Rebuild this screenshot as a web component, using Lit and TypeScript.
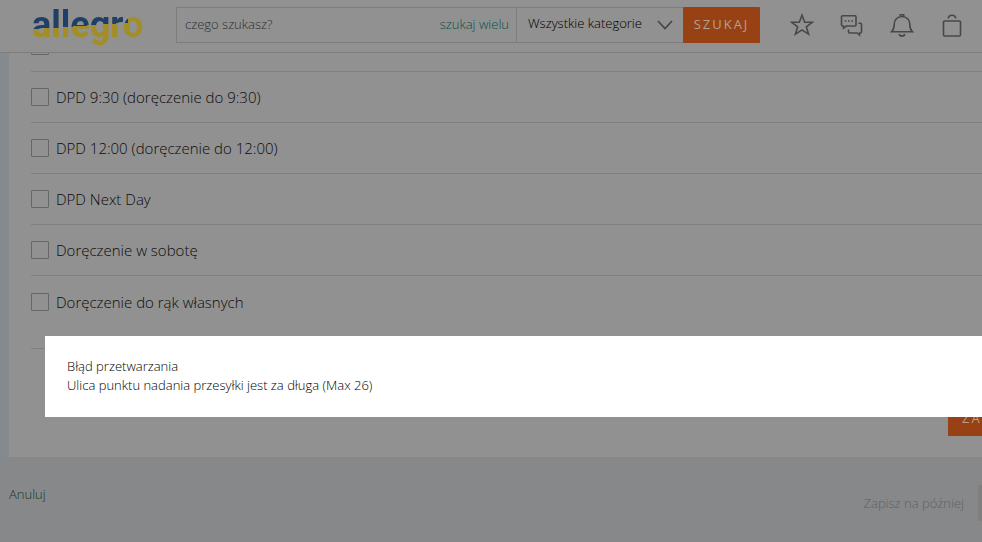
import { LitElement, html, css, svg } from "lit";
import { customElement } from "lit/decorators.js";

const OPTIONS = [
  "DPD 9:30 (doręczenie do 9:30)",
  "DPD 12:00 (doręczenie do 12:00)",
  "DPD Next Day",
  "Doręczenie w sobotę",
  "Doręczenie do rąk własnych",
];

const ICONS = [
  {
    label: "Obserwowane",
    art: svg`<path d="M12 2.2 14.7 9.3H22.3L16.3 13.8 18.6 21.2 12 16.9 5.4 21.2 7.7 13.8 1.7 9.3H9.3Z" stroke-linejoin="miter"/>`,
  },
  {
    label: "Wiadomości",
    art: svg`<path d="M2.5 2.7H15Q16 2.7 16 3.7V12Q16 13 15 13H6.5L3.5 15.2V13H2.5Q1.5 13 1.5 12V3.7Q1.5 2.7 2.5 2.7Z"/><path d="M18.5 10.2H20.5Q21.5 10.2 21.5 11.2V19Q21.5 20 20.5 20H19.5V22L17 20H9.5Q8.5 20 8.5 19V16.5"/><path d="M4.7 8H6.3M8 8H9.6M11.3 8H12.9"/>`,
  },
  {
    label: "Powiadomienia",
    art: svg`<path d="M1.5 18.8H22.5C20.5 17 19.8 15.5 19.8 11.5C19.8 7 16.6 3.5 12 3.5S4.2 7 4.2 11.5C4.2 15.5 3.5 17 1.5 18.8Z"/><path d="M10.3 3.3V1.7H13.7V3.3M9.2 21C9.8 23.8 14.2 23.8 14.8 21"/>`,
  },
  {
    label: "Koszyk",
    art: svg`<rect x="3.5" y="8" width="17" height="15" rx="1"/><path d="M8.2 5.3C8.6 1.2 15.4 1.2 15.8 5.3"/>`,
  },
];

@customElement("app-root")
export class AppRoot extends LitElement {
  static styles = css`
    :host {
      display: block;
      position: relative;
      min-height: 100vh;
      overflow: hidden;
      background: #87888a;
      color: #1c1c1c;
      font: 300 13px/20px "Open Sans", "Noto Sans", sans-serif;
    }
    * {
      box-sizing: border-box;
    }
    button,
    input,
    select {
      margin: 0;
      font: inherit;
      color: inherit;
    }
    .header {
      position: relative;
      z-index: 1;
      display: flex;
      align-items: center;
      height: 53px;
      padding: 0 18px 3px 32px;
      background: #919191;
      border-bottom: 1px solid #7d7d7d;
    }
    .logo {
      flex: none;
      width: 144px;
      text-decoration: none;
    }
    .logo-text {
      display: block;
      width: max-content;
      font: 700 36px/44px Roboto, "Open Sans", sans-serif;
      color: transparent;
      background: linear-gradient(176deg, #1e3f6c 52%, #a28e24 52%) 0 0 / 96px 44px no-repeat,
        #a28e24;
      -webkit-background-clip: text;
      background-clip: text;
    }
    .search {
      flex: 1;
      display: flex;
      height: 36px;
    }
    .query {
      flex: 1;
      min-width: 0;
      display: flex;
      align-items: center;
      border: 1px solid #7d7d7d;
      padding: 0 7px 2px 8px;
    }
    .query-input {
      flex: 1;
      min-width: 0;
      padding: 0;
      border: 0;
      outline: 0;
      background: none;
    }
    .query-input::placeholder {
      color: #303030;
      opacity: 1;
    }
    .multi {
      color: #0a4f48;
      text-decoration: none;
    }
    .category {
      position: relative;
      width: 166px;
    }
    .category-select {
      width: 100%;
      height: 100%;
      padding: 0 32px 3px 11px;
      appearance: none;
      border: solid #7d7d7d;
      border-width: 1px 0;
      border-radius: 0;
      background: none;
      color: #000;
    }
    .chevron {
      position: absolute;
      right: 10px;
      top: 12px;
      fill: none;
      stroke: #454545;
      stroke-width: 1.6;
      pointer-events: none;
    }
    .primary {
      height: 36px;
      border: 0;
      border-radius: 1px;
      background: #974114;
      color: #b5a08f;
      font-weight: 400;
      letter-spacing: 2px;
    }
    .find {
      width: 77px;
      padding: 0 0 2px;
    }
    .icons {
      display: flex;
      gap: 26px;
      margin-left: 30px;
    }
    .icon {
      display: block;
      width: 24px;
      height: 24px;
      padding: 0;
      border: 0;
      background: none;
    }
    .icon svg {
      display: block;
      fill: none;
      stroke: #484848;
      stroke-width: 1.6;
    }
    .content {
      padding-left: 9px;
      background: #858a8e;
    }
    .card {
      overflow: hidden;
      padding-left: 22px;
      padding-bottom: 21px;
      background: #919191;
    }
    .options {
      margin: -32px 0 0;
      padding: 0 0 21px;
      list-style: none;
      border-bottom: 1px solid #7f7f7f;
    }
    .option {
      display: flex;
      align-items: center;
      height: 51px;
      font-size: 15px;
      color: #0c0c0c;
      border-bottom: 1px solid #7f7f7f;
    }
    .option:last-child {
      border-bottom: 0;
    }
    .option-label {
      display: flex;
      align-items: center;
      gap: 7px;
    }
    .box {
      width: 18px;
      height: 18px;
      appearance: none;
      border: 1px solid #666;
      border-radius: 1px;
    }
    .card-actions {
      display: flex;
      justify-content: flex-end;
      margin-top: 51px;
    }
    .submit {
      width: 34px;
      padding: 0 0 0 14px;
      border-radius: 0;
      text-align: left;
      white-space: nowrap;
      overflow: hidden;
    }
    .footer {
      display: flex;
      justify-content: space-between;
      align-items: flex-start;
      padding: 27px 0 20px 9px;
    }
    .cancel {
      color: #123a30;
      text-decoration: none;
    }
    .later-group {
      display: flex;
      align-items: center;
      gap: 14px;
      margin-top: 1px;
    }
    .later {
      padding: 0;
      border: 0;
      background: none;
      color: #606163;
    }
    .next {
      width: 4px;
      height: 36px;
      padding: 0;
      border: 0;
      background: #7f7f7f;
    }
    .dialog {
      position: absolute;
      z-index: 2;
      top: 336px;
      left: 45px;
      right: 0;
      padding: 21px 22px 22px;
      background: #fff;
      color: #000;
      line-height: 19px;
    }
    .dialog-line {
      margin: 0;
    }
  `;

  render() {
    return html`
      <header class="header">
        <a class="logo" href="#"><span class="logo-text">allegro</span></a>
        <form class="search">
          <div class="query">
            <input class="query-input" type="text" placeholder="czego szukasz?" aria-label="czego szukasz?" />
            <a class="multi" href="#">szukaj wielu</a>
          </div>
          <div class="category">
            <select class="category-select" aria-label="Wszystkie kategorie">
              <option>Wszystkie kategorie</option>
            </select>
            <svg class="chevron" width="16" height="12" viewBox="0 0 16 12"><path d="M1 2 8 9.5 15 2" /></svg>
          </div>
          <button class="primary find" type="button">SZUKAJ</button>
        </form>
        <nav class="icons">
          ${ICONS.map(
            (icon) => html`<button class="icon" type="button" aria-label=${icon.label}>
              <svg width="24" height="24" viewBox="0 0 24 24">${icon.art}</svg>
            </button>`
          )}
        </nav>
      </header>
      <main class="content">
        <section class="card">
          <ul class="options">
            <li class="option"><input class="box" type="checkbox" aria-label="DPD" /></li>
            ${OPTIONS.map(
              (text) => html`<li class="option">
                <label class="option-label"><input class="box" type="checkbox" />${text}</label>
              </li>`
            )}
          </ul>
          <div class="card-actions">
            <button class="primary submit" type="button">ZA</button>
          </div>
        </section>
      </main>
      <footer class="footer">
        <a class="cancel" href="#">Anuluj</a>
        <div class="later-group">
          <button class="later" type="button">Zapisz na później</button>
          <button class="next" type="button" aria-label="Dalej"></button>
        </div>
      </footer>
      <div class="dialog" role="alertdialog" aria-label="Błąd przetwarzania">
        <p class="dialog-line">Błąd przetwarzania</p>
        <p class="dialog-line">Ulica punktu nadania przesyłki jest za długa (Max 26)</p>
      </div>
    `;
  }
}
